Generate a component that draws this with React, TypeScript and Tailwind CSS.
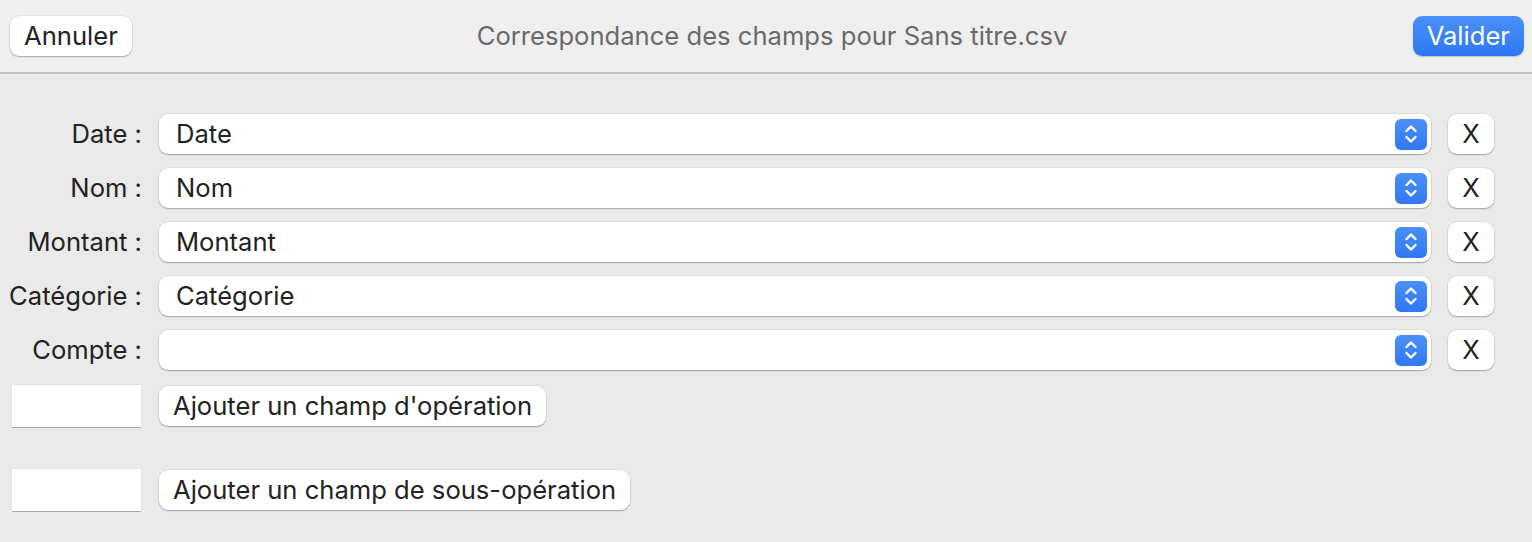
import { useState } from "react";

type Mapping = { label: string; value: string };

const initialMappings: Mapping[] = [
  { label: "Date", value: "Date" },
  { label: "Nom", value: "Nom" },
  { label: "Montant", value: "Montant" },
  { label: "Catégorie", value: "Catégorie" },
  { label: "Compte", value: "" },
];

const font = { fontFamily: "Inter, 'Liberation Sans', sans-serif" };

function Stepper() {
  return (
    <span className="flex h-[31px] w-[32px] items-center justify-center rounded-[6px] bg-gradient-to-b from-[#4a90f8] to-[#2f78f4]">
      <svg width="16" height="22" viewBox="0 0 16 22" fill="none" stroke="white" strokeWidth="2.4" strokeLinecap="round" strokeLinejoin="round">
        <path d="M3.5 8 L8 3.5 L12.5 8" />
        <path d="M3.5 14 L8 18.5 L12.5 14" />
      </svg>
    </span>
  );
}

function MacButton({ children, className = "" }: { children: React.ReactNode; className?: string }) {
  return (
    <button className={`h-[40px] rounded-[9px] bg-white px-[14px] text-[25.6px] text-[#222] shadow-[0_1px_1.5px_rgba(0,0,0,0.28),0_0_0_0.5px_rgba(0,0,0,0.08)] ${className}`}>
      {children}
    </button>
  );
}

export default function App() {
  const [mappings, setMappings] = useState(initialMappings);

  const remove = (label: string) => setMappings((m) => m.map((x) => (x.label === label ? { ...x, value: "" } : x)));

  return (
    <div className="h-[542px] w-[1532px] overflow-hidden bg-[#eaeaea]" style={font}>
      <header className="grid h-[74px] grid-cols-[1fr_auto_1fr] items-center border-b-2 border-[#c2c2c2] bg-[#efefef] px-[10px]">
        <div>
          <MacButton>Annuler</MacButton>
        </div>
        <h1 className="pl-[12px] text-[25.6px] text-[#6a6a6a]">Correspondance des champs pour Sans titre.csv</h1>
        <div className="flex justify-end">
          <button className="mr-[-2px] h-[40px] rounded-[9px] bg-gradient-to-b from-[#4b90f9] to-[#2d77f4] px-[14px] text-[25.6px] text-white shadow-[0_1px_1.5px_rgba(0,0,0,0.2)]">
            Valider
          </button>
        </div>
      </header>

      <main className="flex flex-col pt-[40px]">
        <div className="flex flex-col gap-[14px]">
          {mappings.map((m) => (
            <div key={m.label} className="flex items-center">
              <span className="w-[142px] shrink-0 whitespace-nowrap text-right text-[25.6px] text-[#222]">{m.label} :</span>
              <div className="ml-[17px] flex h-[40px] w-[1272px] items-center justify-between rounded-[9px] bg-white pl-[17px] pr-[4px] shadow-[0_1px_1.5px_rgba(0,0,0,0.28),0_0_0_0.5px_rgba(0,0,0,0.08)]">
                <span className="text-[25.6px] text-[#222]">{m.value}</span>
                <Stepper />
              </div>
              <button
                onClick={() => remove(m.label)}
                className="ml-[17px] h-[40px] w-[46px] rounded-[9px] bg-white text-[25.6px] text-[#222] shadow-[0_1px_1.5px_rgba(0,0,0,0.28),0_0_0_0.5px_rgba(0,0,0,0.08)]"
              >
                X
              </button>
            </div>
          ))}
        </div>

        <div className="mt-[15px] flex items-center">
          <input className="ml-[12px] h-[42px] w-[129px] bg-white shadow-[0_1px_0_rgba(0,0,0,0.25),0_0_0_0.5px_rgba(0,0,0,0.06)] outline-none" />
          <MacButton className="ml-[18px]">Ajouter un champ d'opération</MacButton>
        </div>

        <div className="mt-[42px] flex items-center">
          <input className="ml-[12px] h-[42px] w-[129px] bg-white shadow-[0_1px_0_rgba(0,0,0,0.25),0_0_0_0.5px_rgba(0,0,0,0.06)] outline-none" />
          <MacButton className="ml-[18px]">Ajouter un champ de sous-opération</MacButton>
        </div>
      </main>
    </div>
  );
}
